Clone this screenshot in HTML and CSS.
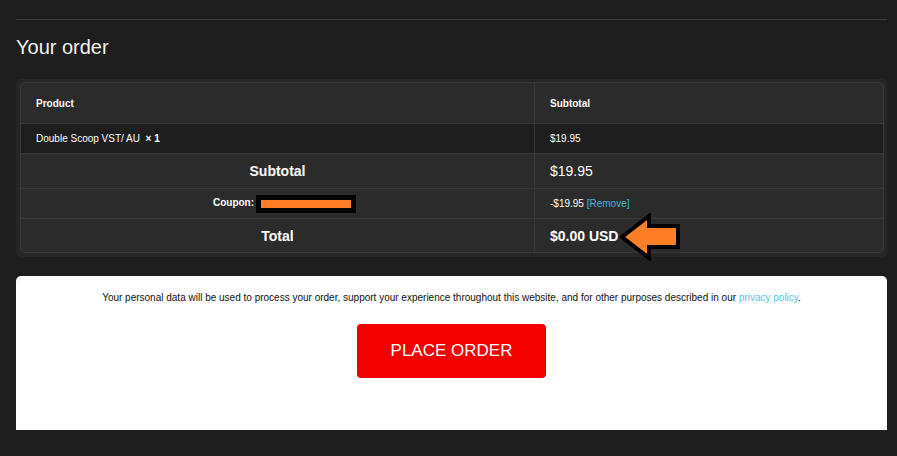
FILE: index.html
```html
<!DOCTYPE html>
<html>
<head>
  <meta name="viewport" content="width=device-width, initial-scale=1" />
  <title>Checkout</title>
  <link rel="stylesheet" href="styles.css">
</head>
<body>
  <div class="page">
    <hr class="rule" />
    <h3 class="order-title">Your order</h3>

    <div class="order-review">
      <table class="shop-table">
        <thead>
          <tr>
            <th class="col-name">Product</th>
            <th class="col-total">Subtotal</th>
          </tr>
        </thead>
        <tbody>
          <tr class="cart-item">
            <td class="col-name">Double Scoop VST/ AU &nbsp;<strong>&times; 1</strong></td>
            <td class="col-total">$19.95</td>
          </tr>
        </tbody>
        <tfoot>
          <tr class="cart-subtotal">
            <th>Subtotal</th>
            <td>$19.95</td>
          </tr>
          <tr class="cart-discount">
            <th><span class="coupon-label">Coupon:<span class="redacted"><span></span></span></span></th>
            <td>-$19.95 <a href="#">[Remove]</a></td>
          </tr>
          <tr class="order-total">
            <th>Total</th>
            <td>
              <span class="total-amount">$0.00 USD</span>
              <svg class="arrow" width="64" height="48" viewBox="0 0 64 48">
                <polygon points="4,24 31,3 31,13 60,13 60,34 31,34 31,45" fill="#ff7f27" stroke="#000" stroke-width="4" stroke-linejoin="miter" />
              </svg>
            </td>
          </tr>
        </tfoot>
      </table>
    </div>

    <div class="payment">
      <p class="privacy-text">Your personal data will be used to process your order, support your experience throughout this website, and for other purposes described in our <a href="#">privacy policy</a>.</p>
      <div class="place-order">
        <button type="button">PLACE ORDER</button>
      </div>
    </div>
  </div>
</body>
</html>
```

FILE: styles.css
```css
body {
  margin: 0;
  background-color: #1e1e1e;
  font-family: "Liberation Sans", Arial, sans-serif;
  color: #fff;
}
.page {
  margin: 0 10px 0 16px;
  padding-top: 19px;
  height: 437px;
}
.rule {
  margin: 0;
  border: none;
  border-top: 1px solid #3a3a3a;
}
.order-title {
  margin: 15px 0 0;
  font-size: 20px;
  font-weight: normal;
  line-height: 24px;
  color: #f2f2f2;
}
.order-review {
  margin-top: 20px;
  background: #262626;
  border-radius: 5px;
  padding: 3px 3px 4px 4px;
}
.shop-table {
  width: 100%;
  border-collapse: separate;
  border-spacing: 0;
  border: 1px solid #383838;
  border-radius: 5px;
  background: #2b2b2b;
  font-size: 10px;
}
.shop-table th,
.shop-table td {
  padding: 0 15px;
  border-top: 1px solid #383838;
  vertical-align: middle;
}
.shop-table tr > :first-child {
  width: 483px;
  border-right: 1px solid #383838;
}
.shop-table thead th {
  border-top: none;
  height: 40px;
  text-align: left;
  font-weight: bold;
}
.cart-item td {
  height: 29px;
  background: #1e1e1e;
}
.cart-subtotal th,
.cart-subtotal td {
  height: 34px;
  font-size: 14px;
}
.cart-subtotal td {
  font-weight: normal;
}
.cart-discount th,
.cart-discount td {
  height: 29px;
}
.coupon-label {
  padding-left: 14px;
}
.cart-discount a {
  color: #3fb7e0;
  text-decoration: none;
}
.redacted {
  display: inline-block;
  vertical-align: middle;
  width: 90px;
  height: 8px;
  padding: 5px;
  margin-left: 2px;
  background: #000;
}
.redacted span {
  display: block;
  height: 100%;
  background: #ff7f27;
}
.order-total th,
.order-total td {
  height: 33px;
  font-size: 14px;
}
.order-total td {
  position: relative;
  font-weight: bold;
}
.arrow {
  position: absolute;
  left: 83px;
  top: -6px;
}
.payment {
  margin-top: 19px;
  height: 154px;
  background: #fff;
  border-radius: 5px 5px 0 0;
  color: #111;
  text-align: center;
  overflow: hidden;
}
.privacy-text {
  margin: 15px 0 0;
  font-size: 10px;
  line-height: 13px;
}
.privacy-text a {
  color: #5bc6ea;
  text-decoration: none;
}
.place-order {
  margin-top: 20px;
}
.place-order button {
  width: 189px;
  height: 54px;
  border: none;
  border-radius: 4px;
  background-color: #f20000;
  color: #fff;
  font-family: "Liberation Sans", Arial, sans-serif;
  font-size: 17px;
  cursor: pointer;
}
```
